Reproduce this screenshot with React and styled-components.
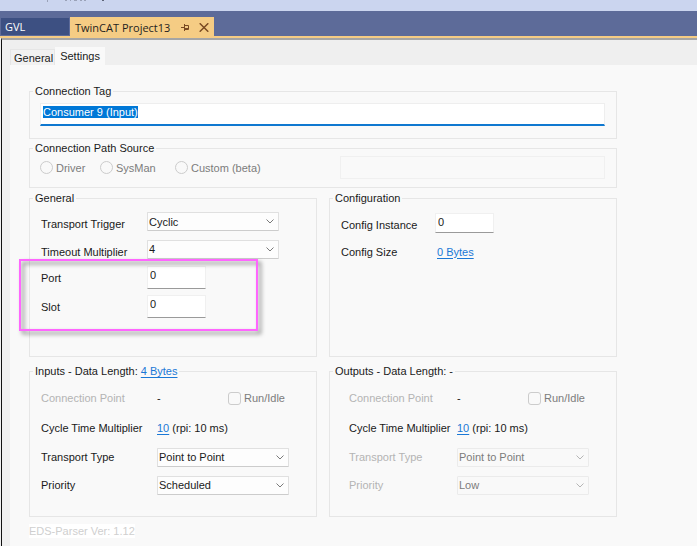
// IMPORT DEPENDENCIES
import React, { useEffect, useRef, useState } from "react";
import styled, { createGlobalStyle, css } from "styled-components";

const App = () => {
  const tagRef = useRef(null);

  // SET INITIAL STATES
  const [tag, setTag] = useState("Consumer 9 (Input)");

  // SELECT THE TAG NAME WHEN THE EDITOR OPENS
  useEffect(() => {
    tagRef.current.focus();
    tagRef.current.select();
  }, []);

  return (
    <>
      <GlobalStyle />
      <Window>
        <MenuBar>
          <MenuMarks />
        </MenuBar>
        <DocumentTabs>
          <DocumentTab>GVL</DocumentTab>
          <DocumentTab $active>
            TwinCAT Project13
            <PinIcon />
            <CloseIcon />
          </DocumentTab>
        </DocumentTabs>
        <Editor>
          <PageTabs>
            <PageTab>General</PageTab>
            <PageTab $active>Settings</PageTab>
          </PageTabs>
          <Page>
            {/* CONNECTION TAG */}
            <Group>
              <Legend>
                <label htmlFor="tag">Connection Tag</label>
              </Legend>
              <TagRow>
                <TagInput
                  id="tag"
                  ref={tagRef}
                  value={tag}
                  onChange={(event) => setTag(event.target.value)}
                />
              </TagRow>
            </Group>

            {/* CONNECTION PATH SOURCE */}
            <Group>
              <Legend>Connection Path Source</Legend>
              <SourceRow>
                <Choices>
                  <Choice>
                    <Radio name="source" disabled />
                    Driver
                  </Choice>
                  <Choice>
                    <Radio name="source" disabled />
                    SysMan
                  </Choice>
                  <Choice>
                    <Radio name="source" disabled />
                    Custom (beta)
                  </Choice>
                </Choices>
                <PathInput aria-label="Custom path" disabled />
              </SourceRow>
            </Group>

            <Columns $top={3}>
              <Group>
                <Legend>General</Legend>
                <Rows $bottom={35}>
                  <Row $label={106} $height={27}>
                    <Label htmlFor="trigger" $low>
                      Transport Trigger
                    </Label>
                    <Dropdown id="trigger" value="Cyclic" />
                  </Row>
                  <Row $label={106} $height={28}>
                    <Label htmlFor="timeout" $low>
                      Timeout Multiplier
                    </Label>
                    <Dropdown id="timeout" value="4" />
                  </Row>
                  <Highlight>
                    <Row $label={106} $height={29}>
                      <Label htmlFor="port">Port</Label>
                      <NumberInput id="port" defaultValue="0" />
                    </Row>
                    <Row $label={106} $height={29}>
                      <Label htmlFor="slot">Slot</Label>
                      <NumberInput id="slot" defaultValue="0" />
                    </Row>
                  </Highlight>
                </Rows>
              </Group>
              <Group>
                <Legend>Configuration</Legend>
                <Rows>
                  <Row $label={94} $height={29}>
                    <Label htmlFor="instance" $low>
                      Config Instance
                    </Label>
                    <NumberInput id="instance" defaultValue="0" $short />
                  </Row>
                  <Row $label={96} $height={29}>
                    <Label as="span">Config Size</Label>
                    <span>
                      <Link href="#size">0 Bytes</Link>
                    </span>
                  </Row>
                </Rows>
              </Group>
            </Columns>

            <Columns $top={7}>
              <DataGroup
                id="inputs"
                title="Inputs"
                length={<Link href="#length">4 Bytes</Link>}
                type="Point to Point"
                priority="Scheduled"
                labelWidth={116}
              />
              <DataGroup
                id="outputs"
                title="Outputs"
                length="-"
                type="Point to Point"
                priority="Low"
                labelWidth={108}
                indent={19}
                disabled
              />
            </Columns>
            <Version>EDS-Parser Ver: 1.12</Version>
          </Page>
        </Editor>
      </Window>
    </>
  );
};

const DataGroup = ({
  id,
  title,
  length,
  type,
  priority,
  labelWidth,
  indent,
  disabled,
}) => (
  <Group>
    <Legend>
      {title} - Data Length: {length}
    </Legend>
    <Rows $indent={indent} $top={5} $bottom={17}>
      <Row $label={labelWidth} $height={30}>
        <Label as="span" $faded>
          Connection Point
        </Label>
        <Point>
          <span>-</span>
          <Choice>
            <Checkbox disabled />
            Run/Idle
          </Choice>
        </Point>
      </Row>
      <Row $label={labelWidth} $height={30}>
        <Label as="span">Cycle Time Multiplier</Label>
        <span>
          <Link href="#cycle">10</Link> (rpi: 10 ms)
        </span>
      </Row>
      <Row $label={labelWidth} $height={28}>
        <Label htmlFor={`${id}-type`} $faded={disabled}>
          Transport Type
        </Label>
        <Dropdown id={`${id}-type`} value={type} disabled={disabled} />
      </Row>
      <Row $label={labelWidth} $height={28}>
        <Label htmlFor={`${id}-priority`} $faded={disabled}>
          Priority
        </Label>
        <Dropdown id={`${id}-priority`} value={priority} disabled={disabled} />
      </Row>
    </Rows>
  </Group>
);

const Dropdown = ({ id, value, disabled }) => (
  <SelectBox>
    <Select id={id} defaultValue={value} disabled={disabled}>
      <option>{value}</option>
    </Select>
    <Chevron viewBox="0 0 8 5" $disabled={disabled}>
      <path d="M0.5 0.5 4 4 7.5 0.5" />
    </Chevron>
  </SelectBox>
);

// LOWER EDGES OF THE MENU ITEMS
const MenuMarks = () => (
  <svg width="120" height="3" viewBox="0 0 120 3" aria-hidden="true">
    <g fill="#9aa2b8">
      <rect x="47" width="1" height="2" />
      <rect x="65" width="2" height="1" />
      <rect x="70" width="1" height="1" />
      <rect x="74" width="3" height="1" />
      <rect x="80" width="2" height="1" />
      <rect x="84" width="2" height="1" />
    </g>
    <rect x="102" width="2" height="1" fill="#5d6478" />
  </svg>
);

const PinIcon = () => (
  <Pin type="button" aria-label="Pin tab">
    <svg width="9" height="8" viewBox="0 0 9 8" fill="none" stroke="#7a4a22">
      <path d="M0 3.5h3M3.5 0v7M3.5 1.5h4v4h-4M3.5 4.5h4" />
    </svg>
  </Pin>
);

const CloseIcon = () => (
  <Close type="button" aria-label="Close tab">
    <svg width="10" height="9" viewBox="0 0 10 9" fill="none" stroke="#7a4a22">
      <path d="M0.7 0.3 9.3 8.7M9.3 0.3 0.7 8.7" strokeWidth="1.5" />
    </svg>
  </Close>
);

const GlobalStyle = createGlobalStyle`
  *, *::after {
    box-sizing: border-box;
  }

  body {
    margin: 0;
    background-color: #efefef;
    color: #1a1a1a;
    font: 11px/14px "Liberation Sans", Arial, sans-serif;
  }

  input, select, button {
    font: inherit;
    color: inherit;
  }
`;

const Window = styled.div`
  display: flex;
  flex-direction: column;
  min-height: 100vh;
`;

const MenuBar = styled.div`
  display: flex;
  height: 11px;
  background-color: #cbd5ef;
`;

const DocumentTabs = styled.div`
  display: flex;
  align-items: flex-end;
  gap: 1px;
  height: 27px;
  padding-left: 1px;
  background-color: #5d6b99;
  border-bottom: 2px solid #f5cc84;
`;

const DocumentTab = styled.div`
  display: flex;
  align-items: center;
  width: 68px;
  height: 17px;
  margin-bottom: 1px;
  padding-left: 4px;
  background-color: #3d5082;
  color: #ffffff;
  font: 11px/16px "Open Sans", "Noto Sans", sans-serif;
  white-space: nowrap;

  ${({ $active }) =>
    $active &&
    css`
      width: 144px;
      height: 19px;
      margin-bottom: 0;
      padding: 2px 5px 0 5px;
      background-color: #f5cc84;
      color: #1e1e1e;
    `}
`;

const IconButton = styled.button`
  display: flex;
  padding: 0;
  border: 0;
  background: none;
`;

const Pin = styled(IconButton)`
  margin-left: auto;
`;

const Close = styled(IconButton)`
  margin-left: 9px;
`;

const Editor = styled.main`
  flex: 1;
  display: flex;
  flex-direction: column;
  margin-left: 1px;
  padding: 7px 0 0 8px;
  border-top: 2px solid #a5a5a5;
  border-left: 1px solid #111111;
`;

const PageTabs = styled.div`
  display: flex;
  align-items: flex-end;
  height: 18px;
`;

const PageTab = styled.button`
  height: 16px;
  padding: 0 1px 0 3px;
  border: 1px solid #e6e6e6;
  border-bottom: 0;
  background-color: #f1f1f1;

  ${({ $active }) =>
    $active &&
    css`
      height: 18px;
      padding: 0 4px 2px;
      border-color: #f9f9f9;
      background-color: #f9f9f9;
    `}
`;

const Page = styled.div`
  flex: 1;
  padding: 19px 80px 0 19px;
  background-color: #f9f9f9;
`;

const Group = styled.fieldset`
  min-width: 0;
  margin: 0 0 2px;
  padding: 0;
  border: 1px solid #e6e6e6;
`;

const Legend = styled.legend`
  margin-left: 3px;
  padding: 0 2px;
`;

const TagRow = styled.div`
  display: flex;
  padding: 5px 11px 12px 10px;
`;

const TagInput = styled.input`
  flex: 1;
  min-width: 0;
  height: 23px;
  padding: 0 2px 4px;
  border: 1px solid #eeeeee;
  border-bottom: 2px solid #0f78d0;
  background-color: #ffffff;
  outline: none;

  &::selection {
    background-color: #0078d7;
    color: #ffffff;
  }
`;

const SourceRow = styled.div`
  display: flex;
  padding: 1px 11px 8px 10px;
`;

const Choices = styled.div`
  display: grid;
  grid-template-columns: 60px 75px 1fr;
  width: 300px;
`;

const Choice = styled.label`
  display: flex;
  align-items: center;
  gap: 3px;
  color: #7c7c7c;
`;

const Radio = styled.input.attrs({ type: "radio" })`
  appearance: none;
  width: 13px;
  height: 13px;
  margin: 0;
  border: 1px solid #cccccc;
  border-radius: 50%;
`;

const Checkbox = styled.input.attrs({ type: "checkbox" })`
  appearance: none;
  width: 13px;
  height: 13px;
  margin: 0;
  border: 1px solid #cccccc;
  border-radius: 3px;
`;

const PathInput = styled.input`
  flex: 1;
  min-width: 0;
  height: 23px;
  border: 1px solid #f0f0f0;
  background-color: #f9f9f9;
`;

const Columns = styled.div`
  display: grid;
  grid-template-columns: 1fr 1fr;
  gap: 12px;
  margin-top: ${({ $top }) => $top}px;

  ${Group} {
    margin: 0;
  }
`;

const Rows = styled.div`
  padding: ${({ $top = 3 }) => $top}px 12px ${({ $bottom = 0 }) => $bottom}px
    ${({ $indent = 11 }) => $indent}px;
`;

const Row = styled.div`
  display: grid;
  grid-template-columns: ${({ $label }) => $label}px 1fr;
  align-items: center;
  height: ${({ $height }) => $height}px;
  white-space: nowrap;
`;

const Label = styled.label`
  padding-top: ${({ $low }) => ($low ? 5 : 0)}px;
  color: ${({ $faded }) => ($faded ? "#b4b4b4" : "inherit")};
`;

const Link = styled.a`
  color: #1a78d6;
  text-underline-offset: 2px;
`;

const SelectBox = styled.div`
  position: relative;
  width: 132px;
`;

const Select = styled.select`
  appearance: none;
  display: block;
  width: 100%;
  height: 19px;
  padding: 0 18px 0 1px;
  border: 1px solid #e0e0e0;
  border-bottom-color: #cccccc;
  border-radius: 1px;
  background-color: #fdfdfd;

  &:disabled {
    border-color: #ebebeb;
    background-color: #f9f9f9;
    color: #7c7c7c;
    opacity: 1;
  }
`;

// SITS OVER THE RIGHT END OF THE SELECT
const Chevron = styled.svg`
  position: absolute;
  top: 7px;
  right: 5px;
  width: 8px;
  height: 5px;
  fill: none;
  stroke: ${({ $disabled }) => ($disabled ? "#b5b5b5" : "#7a7a7a")};
  pointer-events: none;
`;

const NumberInput = styled.input`
  width: 59px;
  height: ${({ $short }) => ($short ? 20 : 23)}px;
  padding: 0 2px ${({ $short }) => ($short ? 2 : 5)}px;
  border: 1px solid #f0f0f0;
  border-bottom-color: #9a9a9a;
  background-color: #ffffff;
`;

// PINK FRAME DRAWN OVER THE PORT AND SLOT ROWS
const Highlight = styled.div`
  position: relative;

  &::after {
    content: "";
    position: absolute;
    top: -4px;
    left: -22px;
    width: 239px;
    height: 72px;
    border: 2px solid #ff66ff;
    filter: drop-shadow(3px 3px 2px rgba(0, 0, 0, 0.5));
    pointer-events: none;
  }
`;

const Point = styled.div`
  display: flex;
  align-items: center;
  justify-content: space-between;
  width: 128px;
`;

const Version = styled.div`
  width: fit-content;
  margin-top: 7px;
  background-color: #ffffff;
  color: #cfcfcf;
`;

export default App;
